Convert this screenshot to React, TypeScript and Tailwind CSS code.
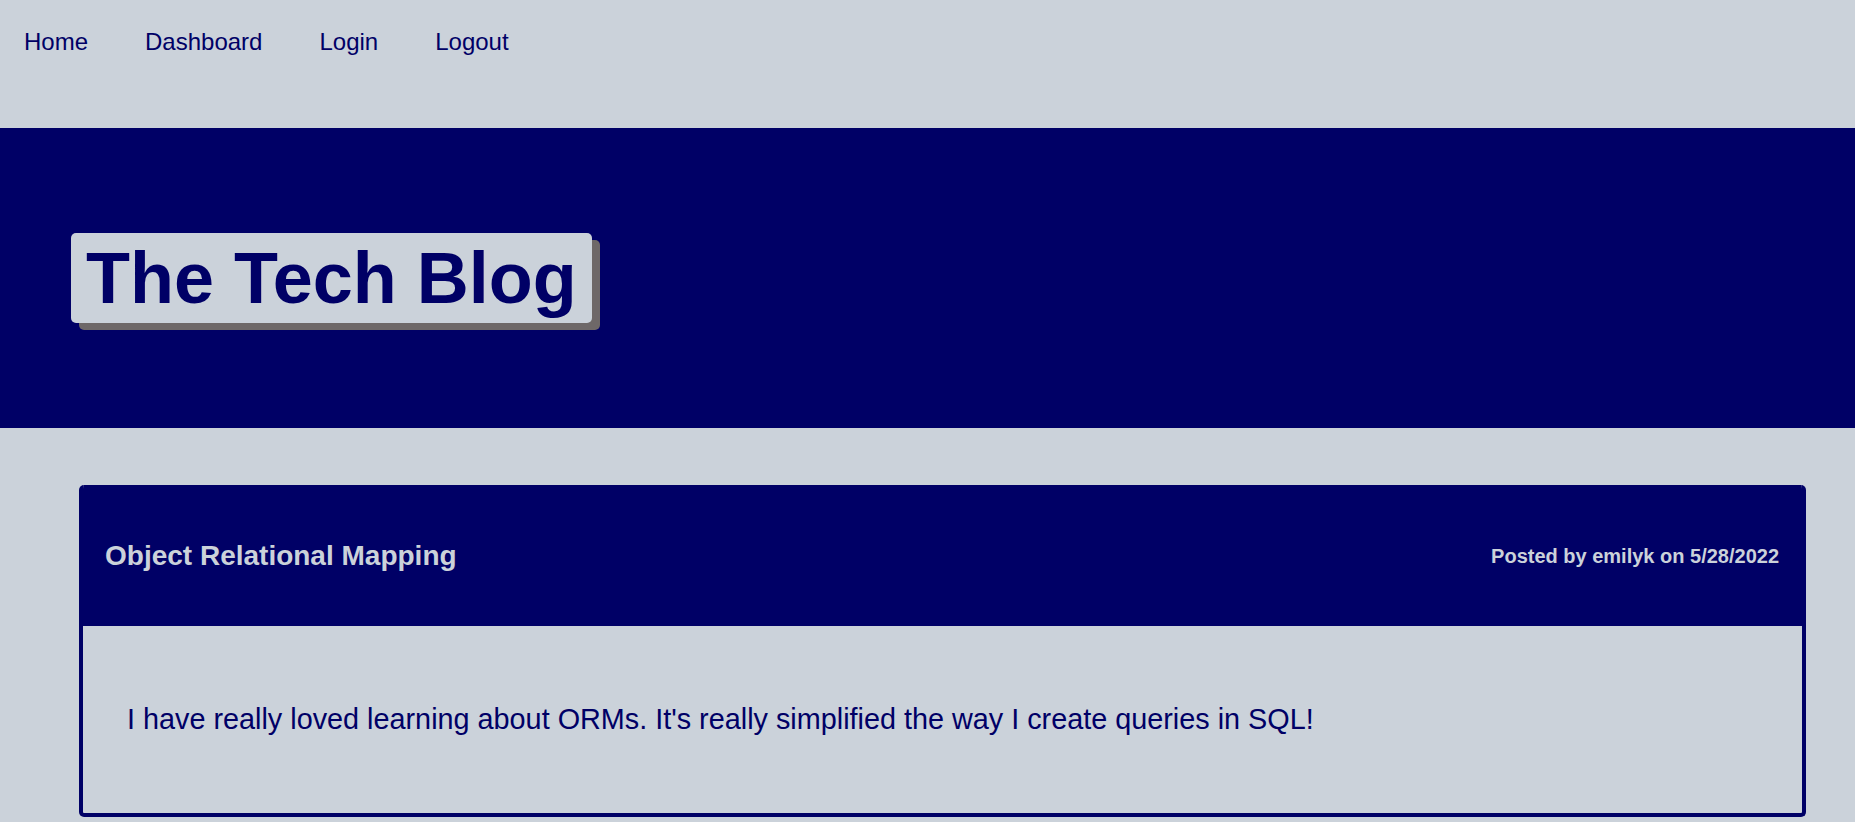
export default function App() {
  return (
    <div
      className="min-h-screen bg-[#cbd2da] pb-[5px] text-[#000066]"
      style={{ fontFamily: '"Liberation Sans", Arial, sans-serif' }}
    >
      {/* Nav */}
      <nav className="h-[128px] pl-[24px] pt-[26px]">
        <ul className="flex gap-[57px] text-2xl leading-8">
          <li><a href="#">Home</a></li>
          <li><a href="#">Dashboard</a></li>
          <li><a href="#">Login</a></li>
          <li><a href="#">Logout</a></li>
        </ul>
      </nav>

      {/* Hero */}
      <header className="flex h-[300px] items-center bg-[#000066] pl-[71px]">
        <h1 className="rounded-[5px] bg-[#cbd2da] px-[15px] py-[4px] text-[72px] font-bold leading-[82px] shadow-[8px_7px_0_#6e6868]">
          The Tech Blog
        </h1>
      </header>

      {/* Post */}
      <main className="ml-[79px] mr-[49px] mt-[57px]">
        <article className="overflow-hidden rounded-[5px] border-4 border-t-0 border-[#000066]">
          <div className="-mx-1 flex h-[141px] items-center justify-between bg-[#000066] pl-[26px] pr-[27px] text-[#cbd2da]">
            <h2 className="text-[28px] font-bold">Object Relational Mapping</h2>
            <p className="text-xl font-bold">Posted by emilyk on 5/28/2022</p>
          </div>
          <div className="flex h-[187px] items-center pl-[44px]">
            <p className="text-[28.8px]">
              I have really loved learning about ORMs. It's really simplified the way I create queries in SQL!
            </p>
          </div>
        </article>
      </main>
    </div>
  );
}
